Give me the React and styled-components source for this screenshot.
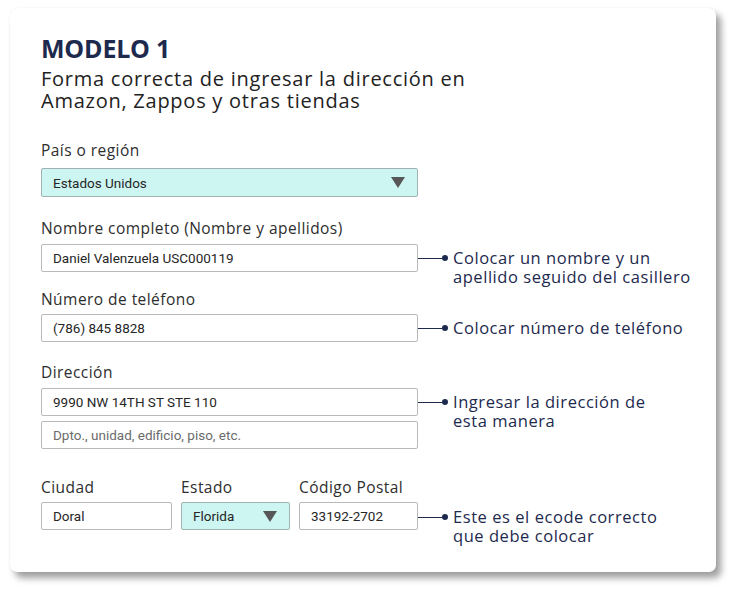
import React from "react";
import styled, { createGlobalStyle } from "styled-components";

const Global = createGlobalStyle`
  html, body {
    margin: 0;
    padding: 0;
    background: #ffffff;
  }
  body {
    font-family: "Open Sans", "Noto Sans", sans-serif;
    color: #2b2b2b;
  }
`;

const Page = styled.div`
  width: 738px;
  height: 594px;
  padding: 8px 0 0 10px;
  box-sizing: border-box;
`;

const Card = styled.div`
  width: 706px;
  height: 564px;
  box-sizing: border-box;
  padding: 25px 0 0 31px;
  background: #ffffff;
  border-radius: 7px;
  box-shadow: 0 0 1px rgba(0, 0, 0, 0.12), 5px 6px 7px rgba(0, 0, 0, 0.38);
  display: flex;
  flex-direction: column;
`;

const Title = styled.h1`
  margin: 0;
  font-size: 25px;
  line-height: 30px;
  font-weight: 700;
  color: #1d2a4e;
  letter-spacing: -0.2px;
`;

const Subtitle = styled.p`
  margin: 5px 0 0;
  font-size: 20px;
  line-height: 22px;
  font-weight: 400;
  color: #222;
  letter-spacing: 0.75px;
`;

const Group = styled.div`
  display: flex;
  flex-direction: column;
  gap: ${(p) => p.$gap || 6}px;
  margin-top: ${(p) => p.$top}px;
`;

const Label = styled.div`
  font-size: 15.5px;
  line-height: 20px;
  font-weight: 500;
  color: #2e2e2e;
  letter-spacing: 0.45px;
`;

const Row = styled.div`
  display: grid;
  grid-template-columns: 377px 1fr;
  height: ${(p) => p.$h || 28}px;
`;

const Field = styled.div`
  display: flex;
  align-items: center;
  justify-content: space-between;
  height: ${(p) => p.$h || 28}px;
  box-sizing: border-box;
  padding: 0 11px 0 11px;
  border: 1px solid ${(p) => (p.$select ? "#9fb3b5" : "#b9b9b9")};
  border-radius: 2px;
  background: ${(p) => (p.$select ? "#cdf5f2" : "#ffffff")};
  font-family: "Roboto", "Liberation Sans", sans-serif;
  font-size: 13.5px;
  color: ${(p) => (p.$placeholder ? "#6b6b6b" : "#262626")};
  letter-spacing: 0;
`;

const Arrow = styled.span`
  width: 0;
  height: 0;
  border-left: 7px solid transparent;
  border-right: 7px solid transparent;
  border-top: 11px solid #575757;
  margin-right: 1px;
`;

const Stack = styled.div`
  display: flex;
  flex-direction: column;
  gap: 5px;
  justify-content: ${(p) => (p.$end ? "flex-end" : "flex-start")};
`;

const Note = styled.div`
  display: flex;
  align-items: flex-start;
  height: 28px;
  overflow: visible;
`;

const Connector = styled.div`
  display: flex;
  align-items: center;
  height: 28px;
  flex: none;

  &::before {
    content: "";
    width: 24px;
    height: 1px;
    background: #1d2a4e;
  }
  &::after {
    content: "";
    width: 6px;
    height: 6px;
    border-radius: 50%;
    background: #1d2a4e;
  }
`;

const NoteText = styled.div`
  margin: 4px 0 0 5px;
  font-size: 16.5px;
  line-height: 19px;
  font-weight: 500;
  color: #1d2a4e;
  white-space: nowrap;
  letter-spacing: 0.55px;
`;

const Cols = styled.div`
  display: grid;
  grid-template-columns: 131px 109px 119px;
  column-gap: 9px;
  width: 377px;
`;

const Col = styled.div`
  display: flex;
  flex-direction: column;
  gap: 5px;
`;

function Annotation({ children }) {
  return (
    <Note>
      <Connector />
      <NoteText>{children}</NoteText>
    </Note>
  );
}

export default function App() {
  return (
    <Page>
      <Global />
      <Card>
        <Title>MODELO 1</Title>
        <Subtitle>
          Forma correcta de ingresar la dirección en
          <br />
          Amazon, Zappos y otras tiendas
        </Subtitle>

        <Group $top={28} $gap={8}>
          <Label>País o región</Label>
          <Row $h={29}>
            <Field $select $h={29}>
              Estados Unidos
              <Arrow />
            </Field>
          </Row>
        </Group>

        <Group $top={21}>
          <Label>Nombre completo (Nombre y apellidos)</Label>
          <Row>
            <Field>Daniel Valenzuela USC000119</Field>
            <Annotation>
              Colocar un nombre y un
              <br />
              apellido seguido del casillero
            </Annotation>
          </Row>
        </Group>

        <Group $top={17} $gap={5}>
          <Label>Número de teléfono</Label>
          <Row>
            <Field>(786) 845 8828</Field>
            <Annotation>Colocar número de teléfono</Annotation>
          </Row>
        </Group>

        <Group $top={20}>
          <Label>Dirección</Label>
          <Stack>
            <Row>
              <Field>9990 NW 14TH ST STE 110</Field>
              <Annotation>
                Ingresar la dirección de
                <br />
                esta manera
              </Annotation>
            </Row>
            <Row>
              <Field $placeholder>Dpto., unidad, edificio, piso, etc.</Field>
            </Row>
          </Stack>
        </Group>

        <Group $top={28}>
          <Row $h={54}>
            <Cols>
              <Col>
                <Label>Ciudad</Label>
                <Field>Doral</Field>
              </Col>
              <Col>
                <Label>Estado</Label>
                <Field $select>
                  Florida
                  <Arrow />
                </Field>
              </Col>
              <Col>
                <Label>Código Postal</Label>
                <Field>33192-2702</Field>
              </Col>
            </Cols>
            <Stack $end>
              <Annotation>
                Este es el ecode correcto
                <br />
                que debe colocar
              </Annotation>
            </Stack>
          </Row>
        </Group>
      </Card>
    </Page>
  );
}
